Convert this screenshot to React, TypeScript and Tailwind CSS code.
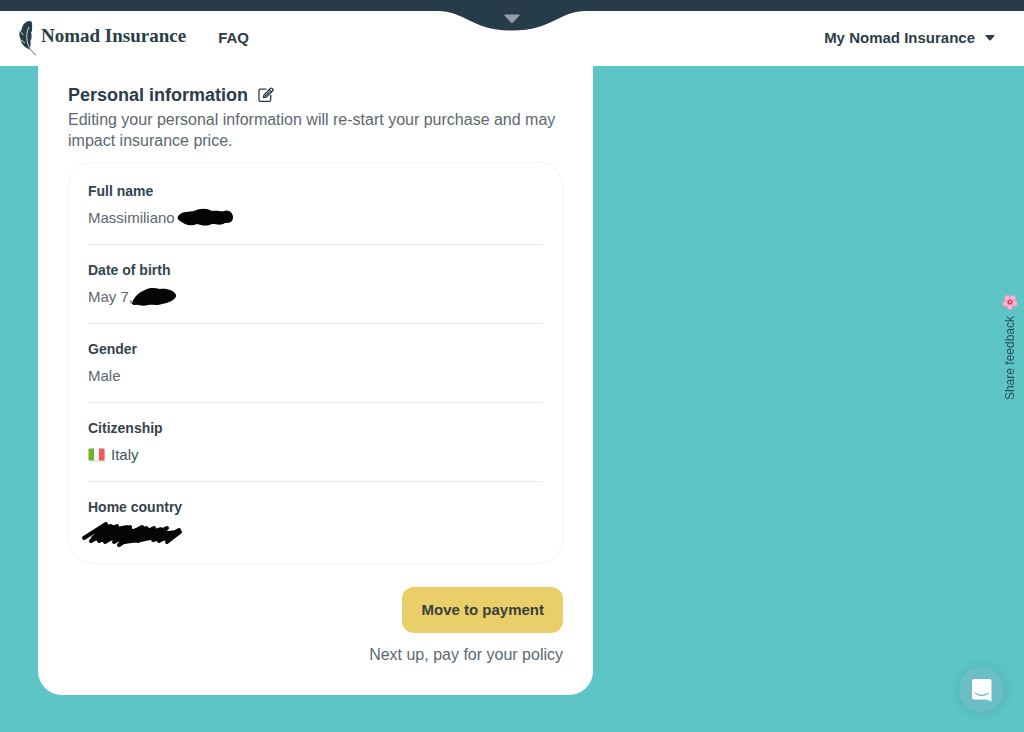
import React from 'react';

interface InfoRowProps {
  label: string;
  children: React.ReactNode;
}

const InfoRow: React.FC<InfoRowProps> = ({ label, children }) => (
  <div className="border-b border-[#e6ebec] pt-[13px] pb-3.5 last:border-b-0">
    <dt className="text-sm leading-6 font-bold text-[#33444f]">{label}</dt>
    <dd className="mt-[3px] flex h-6 items-center text-[15px] leading-6 text-[#5c6870]">{children}</dd>
  </div>
);

const FeatherLogo = () => (
  <svg width="18" height="36" viewBox="0 0 18 36" aria-hidden="true">
    <path
      d="M12.500 1.500C11 .3 7 .8 4.500 4.500C3 7 2.500 9 2.300 11L.8 10.500C0 14 .3 17 1.800 19.500L1.500 20.500C3 24.500 6 28 10.800 29.500C11.500 26 11.800 23 11.500 20.500L12.300 19C12.800 16 12.600 14 12 12.500L12.800 11.500C13.500 7.500 13.300 4 12.500 1.500Z"
      fill="#263c49"
    />
    <path d="M10 7C6.800 13 7 21.500 10.800 28.500M1 11L4.500 15M1.800 20L6 23" fill="none" stroke="#fff" strokeWidth="0.800" />
    <path d="M9.800 27C11 30 13.500 32 17 35" fill="none" stroke="#566570" strokeWidth="1" />
  </svg>
);

const ItalyFlag = () => (
  <svg width="17" height="14" viewBox="0 0 17 14" className="mr-1.5" role="img" aria-label="Flag of Italy">
    <rect x="1" y="1.500" width="16" height="12" rx="1" fill="#d5dadb" />
    <rect x=".5" y=".5" width="16" height="12" rx="1" fill="#f4f4f2" />
    <path d="M1.500 .5H6V12.500H1.500Q.5 12.500 .5 11.500V1.500Q.5 .5 1.500 .5Z" fill="#6fb02c" />
    <path d="M11 .5H15.500Q16.500 .5 16.500 1.500V11.500Q16.500 12.500 15.500 12.500H11Z" fill="#f1595f" />
  </svg>
);

const Blossom = () => (
  <svg width="16" height="16" viewBox="0 0 16 16" aria-hidden="true">
    <g fill="#fbb3d0" stroke="#ea86b2" strokeWidth="0.500">
      <ellipse cx="8" cy="3.600" rx="2.900" ry="3.300" transform="rotate(36 8 8)" />
      <ellipse cx="8" cy="3.600" rx="2.900" ry="3.300" transform="rotate(108 8 8)" />
      <ellipse cx="8" cy="3.600" rx="2.900" ry="3.300" transform="rotate(180 8 8)" />
      <ellipse cx="8" cy="3.600" rx="2.900" ry="3.300" transform="rotate(252 8 8)" />
      <ellipse cx="8" cy="3.600" rx="2.900" ry="3.300" transform="rotate(324 8 8)" />
    </g>
    <circle cx="8" cy="8" r="2.600" fill="#d93c78" />
    <circle cx="8" cy="8" r="1.200" fill="#f0b060" />
  </svg>
);

export default function App() {
  return (
    <div className="flex min-h-screen flex-col bg-[#5dc5c6] font-['Liberation_Sans',Arial,sans-serif]">
      <header className="relative bg-white">
        <div className="h-[11px] bg-[#263c49]" />
        <button type="button" aria-label="Open menu" className="absolute top-2.5 left-1/2 -translate-x-1/2">
          <svg width="150" height="21" viewBox="0 0 150 21" className="block">
            <path d="M0 0H150V1C121 1 116 20.500 75 20.500S29 1 0 1Z" fill="#263c49" />
            <path d="M67.500 4.500H82.500Q83 5 82.500 5.500L76 12.500Q75 13.300 74 12.500L67.500 5.500Q67 5 67.500 4.500Z" fill="#929da4" />
          </svg>
        </button>
        <nav className="flex h-[55px] items-center justify-between pr-[29px] pb-0.5 pl-[19px] text-[#2b3d48]">
          <div className="flex items-center">
            <a href="#home" className="flex items-center gap-1">
              <FeatherLogo />
              <span className="pb-1 font-['Liberation_Serif',serif] text-[19px] leading-6 font-bold">Nomad Insurance</span>
            </a>
            <a href="#faq" className="ml-8 text-[15px] leading-6 font-bold">FAQ</a>
          </div>
          <button type="button" className="flex items-center gap-2.5 text-[15px] leading-6 font-bold">
            My Nomad Insurance
            <svg width="10" height="6" viewBox="0 0 10 6" aria-hidden="true">
              <path d="M.8.500H9.200L5.500 5Q5 5.500 4.500 5Z" fill="#2b3d48" stroke="#2b3d48" strokeLinejoin="round" />
            </svg>
          </button>
        </nav>
      </header>

      <main className="px-[38px] pb-9">
        <section className="w-full max-w-[555px] rounded-b-3xl bg-white px-[30px] pt-[15px] pb-7">
          <div className="flex h-7 items-center gap-2.5">
            <h1 className="text-lg leading-7 font-bold text-[#2b3d48]">Personal information</h1>
            <button type="button" aria-label="Edit personal information" className="text-[#2b3d48]">
              <svg width="16" height="16" viewBox="0 0 16 16" fill="none" stroke="currentColor" strokeWidth="1.300" strokeLinecap="round" strokeLinejoin="round">
                <path d="M8 2.200H2.200Q1 2.200 1 3.400V13Q1 14.300 2.200 14.300H11.500Q12.700 14.300 12.700 13V8.500" />
                <path d="M5.400 10.700L6 7.900L12.400 1.500Q13.300.700 14.200 1.500L14.700 2Q15.500 2.900 14.700 3.700L8.300 10.100Z" />
                <path d="M11.200 2.800L13.400 5M6.800 9.400L11 5.200" />
              </svg>
            </button>
          </div>
          <p className="text-base leading-[21px] text-[#5c6870]">
            Editing your personal information will re-start your purchase and may impact insurance price.
          </p>

          <dl className="mt-[11px] rounded-3xl border border-[#f3f5f5] px-[19px] py-[3px]">
            <InfoRow label="Full name">
              Massimiliano
              <svg width="58" height="20" viewBox="0 0 58 20" className="ml-0.5" role="img" aria-label="Redacted">
                <path
                  d="M2 7C6 3 12 4 17 3C23 0 30 0 35 3C41 2 44 4 47 3C52 1 56 5 56 9C56 14 53 15 48 15C44 18 39 16 35 16C29 19 24 17 20 16C13 19 7 16 3 13C0 11 0 9 2 7Z"
                  fill="#050505"
                />
              </svg>
            </InfoRow>
            <InfoRow label="Date of birth">
              May 7,
              <svg width="46" height="20" viewBox="0 0 46 20" className="-ml-0.5" role="img" aria-label="Redacted">
                <path
                  d="M1 16C3 10 8 5 14 3C19 0 24 1 29 2C36 1 44 4 45 8C46 12 38 16 31 17C25 19 21 17 17 18C11 20 7 17 4 18Q1 18 1 16Z"
                  fill="#050505"
                />
              </svg>
            </InfoRow>
            <InfoRow label="Gender">Male</InfoRow>
            <InfoRow label="Citizenship">
              <ItalyFlag />
              <span className="text-[#45545e]">Italy</span>
            </InfoRow>
            <InfoRow label="Home country">
              <svg width="104" height="28" viewBox="0 0 104 28" className="-ml-[7px] shrink-0" role="img" aria-label="Redacted">
                <path
                  d="M10 17L24 5L30 4L36 7L46 5L52 9L66 6L70 10L80 7L86 11L98 10L86 21L74 19L60 22L42 24L34 20L22 22L12 20Z"
                  fill="#050505"
                />
                <path
                  d="M3 18L25 4L10 21L36 6L24 22L49 7L33 22L61 7L44 22L73 8L57 21L86 8L72 20L99 12L86 22"
                  fill="none"
                  stroke="#050505"
                  strokeWidth="4"
                  strokeLinecap="round"
                  strokeLinejoin="round"
                />
                <path d="M38 25L54 14M18 21L30 13M78 21L98 10" stroke="#050505" strokeWidth="4" strokeLinecap="round" />
              </svg>
            </InfoRow>
          </dl>

          <div className="mt-[23px] flex flex-col items-end">
            <button type="button" className="h-[46px] rounded-xl bg-[#eace69] px-[19px] text-[15px] leading-6 font-bold text-[#38413e]">
              Move to payment
            </button>
            <p className="mt-2.5 text-base leading-6 text-[#5c6870]">Next up, pay for your policy</p>
          </div>
        </section>
      </main>

      <button type="button" className="fixed top-[294px] right-1.5 flex flex-col items-center gap-1.5 text-[#2b4b56]">
        <Blossom />
        <span className="rotate-180 text-xs leading-4 [writing-mode:vertical-rl]">Share feedback</span>
      </button>

      <button
        type="button"
        aria-label="Open chat"
        className="fixed right-5 bottom-5 flex size-[45px] items-center justify-center rounded-full bg-[#6bbec5] shadow-[0_1px_12px_rgba(0,0,0,0.12)]"
      >
        <svg width="22" height="24" viewBox="0 0 22 24" aria-hidden="true">
          <path d="M3 1H18.500Q20.500 1 20.500 3V23.500L15 21.500H3Q1 21.500 1 19.500V3Q1 1 3 1Z" fill="#fff" />
          <path d="M4.500 15.200Q10.700 19.800 17 15.200" fill="none" stroke="#6bbec5" strokeWidth="1.300" strokeLinecap="round" />
        </svg>
      </button>
    </div>
  );
}
